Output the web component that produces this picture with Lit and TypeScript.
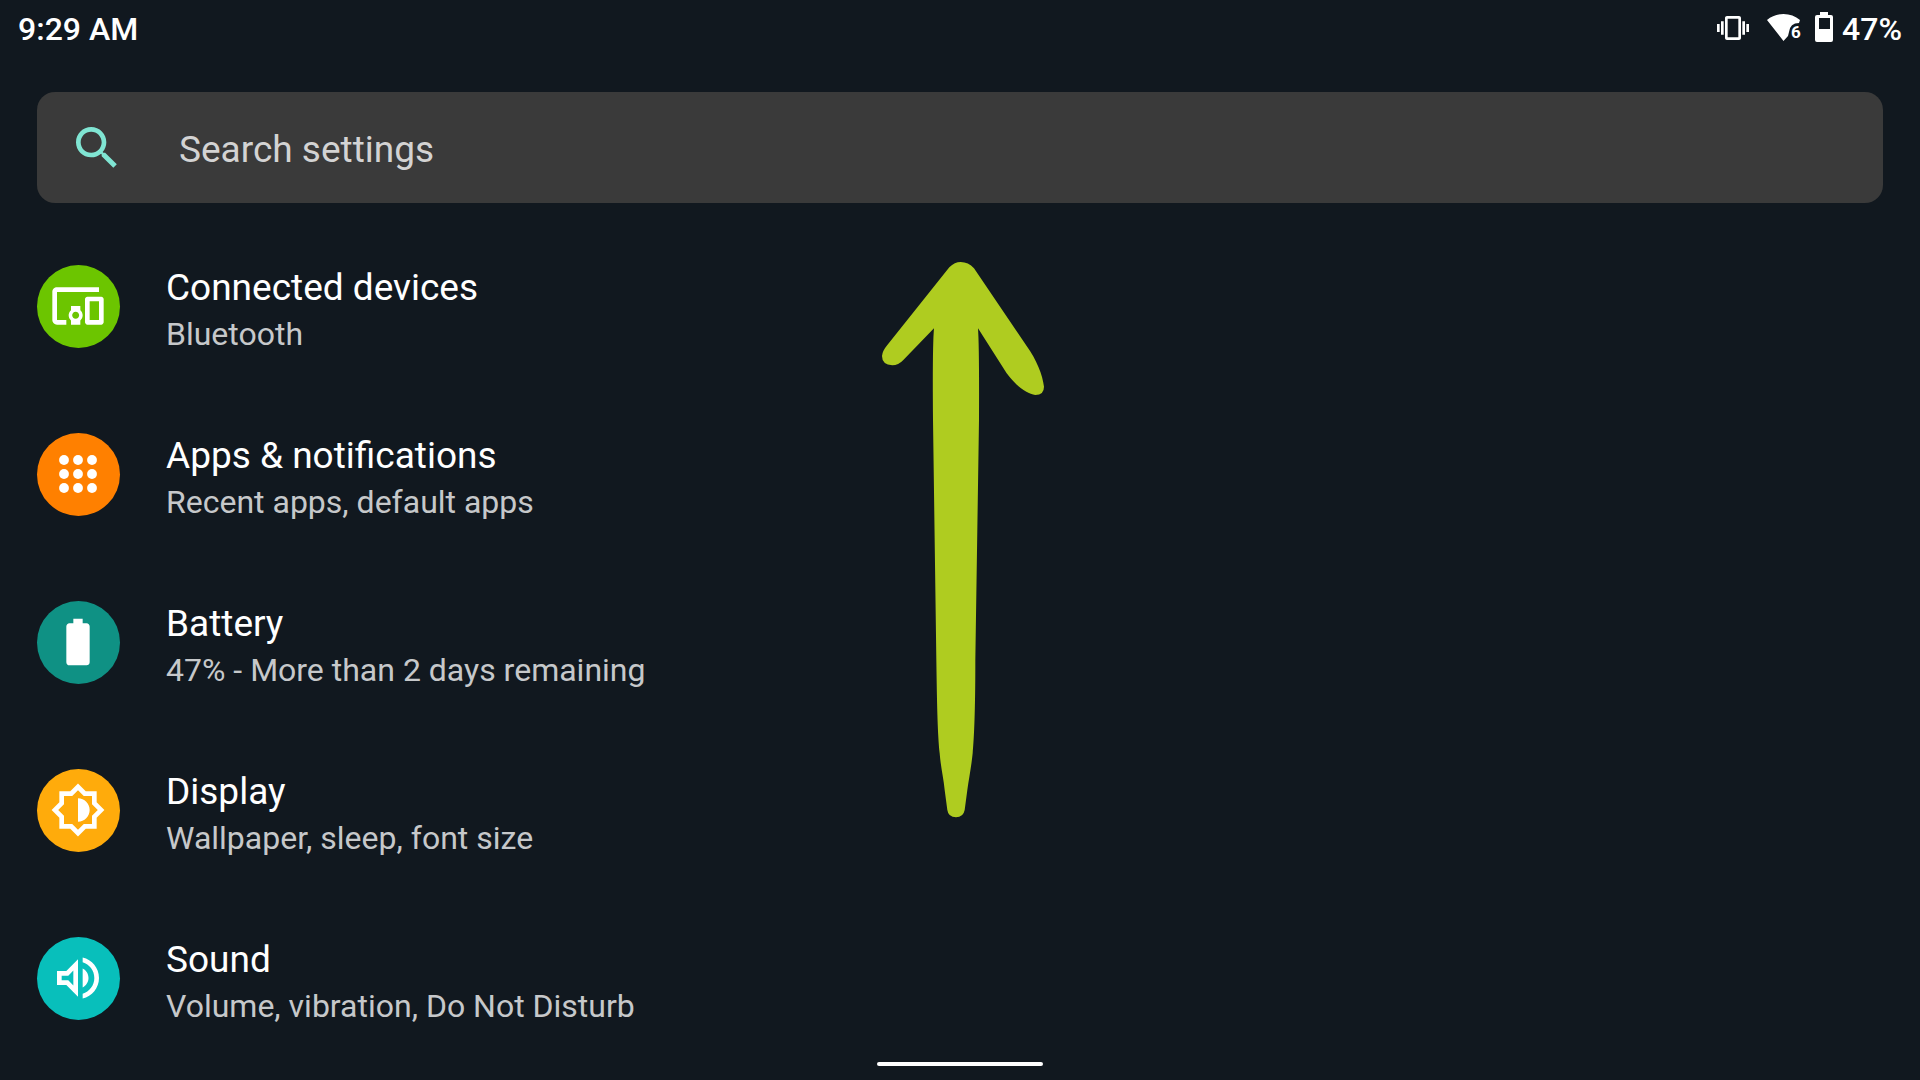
import { LitElement, html, css, svg, SVGTemplateResult } from "lit";
import { customElement } from "lit/decorators.js";
import { classMap } from "lit/directives/class-map.js";

interface SettingsEntry {
  id: string;
  title: string;
  summary: string;
  icon: SVGTemplateResult;
}

const ENTRIES: SettingsEntry[] = [
  {
    id: "devices",
    title: "Connected devices",
    summary: "Bluetooth",
    icon: svg`<path d="M3 6h18V4H3c-1.1 0-2 .9-2 2v12c0 1.1.9 2 2 2h4v-2H3V6zm10 6H9v1.78c-.61.55-1 1.33-1 2.22s.39 1.67 1 2.22V20h4v-1.78c.61-.55 1-1.34 1-2.22s-.39-1.67-1-2.22V12zm-2 5.5c-.83 0-1.5-.67-1.5-1.5s.67-1.5 1.5-1.5 1.5.67 1.5 1.5-.67 1.5-1.5 1.5zM22 8h-6c-.5 0-1 .5-1 1v10c0 .5.5 1 1 1h6c.5 0 1-.5 1-1V9c0-.5-.5-1-1-1zm-1 10h-4v-8h4v8z"/>`,
  },
  {
    id: "apps",
    title: "Apps & notifications",
    summary: "Recent apps, default apps",
    icon: svg`${[6, 12, 18].map((y) => [6, 12, 18].map((x) => svg`<circle cx=${x} cy=${y} r="2.1"/>`))}`,
  },
  {
    id: "battery",
    title: "Battery",
    summary: "47% - More than 2 days remaining",
    icon: svg`<path d="M15.67 4H14V2h-4v2H8.33C7.6 4 7 4.6 7 5.33v15.33C7 21.4 7.6 22 8.33 22h7.33c.74 0 1.34-.6 1.34-1.33V5.33C17 4.6 16.4 4 15.67 4z"/>`,
  },
  {
    id: "display",
    title: "Display",
    summary: "Wallpaper, sleep, font size",
    icon: svg`<path d="M20 8.69V4h-4.69L12 .69 8.69 4H4v4.69L.69 12 4 15.31V20h4.69L12 23.31 15.31 20H20v-4.69L23.31 12 20 8.69zm-2 5.79V18h-3.52L12 20.48 9.52 18H6v-3.52L3.52 12 6 9.52V6h3.52L12 3.52 14.48 6H18v3.52L20.48 12 18 14.48zM12 7v10c2.76 0 5-2.24 5-5s-2.24-5-5-5z"/>`,
  },
  {
    id: "sound",
    title: "Sound",
    summary: "Volume, vibration, Do Not Disturb",
    icon: svg`<path d="M3 9v6h4l5 5V4L7 9H3zm7-.17v6.34L7.83 13H5v-2h2.83L10 8.83zM16.5 12c0-1.77-1.02-3.29-2.5-4.03v8.05c1.48-.73 2.5-2.25 2.5-4.02zM14 3.23v2.06c2.89.86 5 3.54 5 6.71s-2.11 5.85-5 6.71v2.06c4.01-.91 7-4.49 7-8.77s-2.99-7.86-7-8.77z"/>`,
  },
];

@customElement("status-bar")
export class StatusBar extends LitElement {
  static styles = css`
    :host {
      display: flex;
      justify-content: space-between;
      align-items: center;
      height: 58px;
      padding: 0 18px;
      color: #fff;
      font-size: 32px;
      font-weight: 500;
      line-height: 58px;
    }
    .indicators {
      display: flex;
      align-items: center;
    }
    svg {
      display: block;
      margin-bottom: 2px;
      fill: #fff;
    }
    .vibrate {
      width: 32px;
      height: 32px;
      margin-right: 17px;
    }
    .wifi {
      width: 36px;
      height: 32px;
      margin-right: 13px;
    }
    .digit {
      font-size: 17px;
      font-weight: 700;
    }
    .battery {
      width: 18px;
      height: 32px;
      margin-right: 9px;
    }
  `;

  render() {
    return html`
      <time>9:29 AM</time>
      <div class="indicators">
        <svg class="vibrate" viewBox="0 0 24 24" aria-label="Vibrate">
          <path d="M0 15h2V9H0v6zm3 2h2V7H3v10zm19-8v6h2V9h-2zm-3 8h2V7h-2v10zM16.5 3h-9C6.67 3 6 3.67 6 4.5v15c0 .83.67 1.5 1.5 1.5h9c.83 0 1.5-.67 1.5-1.5v-15c0-.83-.67-1.5-1.5-1.5zM16 19H8V5h8v14z"/>
        </svg>
        <svg class="wifi" viewBox="0 0 36 32" aria-label="Wi-Fi">
          <path d="M1 8Q8 2 17.500 2T34 8L33 11Q24 11 23 20L22 24L17.500 29Z"/>
          <text class="digit" x="25" y="26">6</text>
        </svg>
        <svg class="battery" viewBox="0 0 18 32" aria-label="Battery level">
          <path fill-rule="evenodd" d="M5 0h8v3h3q2 0 2 2v23q0 2-2 2H2q-2 0-2-2V5q0-2 2-2h3zM4 6v11h11V6z"/>
        </svg>
        <span>47%</span>
      </div>
    `;
  }
}

@customElement("app-root")
export class AppRoot extends LitElement {
  static styles = css`
    :host {
      display: flex;
      flex-direction: column;
      position: relative;
      box-sizing: border-box;
      min-height: 100vh;
      background: #11181f;
      font-family: Roboto, "Liberation Sans", sans-serif;
    }
    .search {
      display: flex;
      align-items: center;
      gap: 54px;
      height: 111px;
      box-sizing: border-box;
      margin: 34px 37px 0;
      padding: 0 32px;
      border-radius: 18px;
      background: #3a3a3a;
    }
    .search svg {
      flex: none;
      width: 56px;
      height: 56px;
      fill: #80e5d3;
    }
    .search input {
      flex: 1;
      min-width: 0;
      height: 56px;
      padding: 4px 0 0;
      border: 0;
      outline: 0;
      background: none;
      color: #fff;
      font: 400 37px Roboto, "Liberation Sans", sans-serif;
    }
    .search input::placeholder {
      color: #d3d3d3;
      opacity: 1;
    }
    .entries {
      display: flex;
      flex-direction: column;
      gap: 79px;
      margin: 0;
      padding: 62px 37px 0;
      list-style: none;
    }
    .entry {
      display: flex;
      gap: 46px;
      color: #fff;
      text-decoration: none;
    }
    .badge {
      display: grid;
      place-items: center;
      flex: none;
      box-sizing: border-box;
      width: 83px;
      height: 83px;
      padding: 0 2px 2px 0;
      border-radius: 50%;
    }
    .badge svg {
      width: 56px;
      height: 56px;
      fill: #fff;
    }
    .devices { background: #6cc500; }
    .apps { background: #ff8000; }
    .battery { background: #0f9184; }
    .display { background: #ffab0b; }
    .sound { background: #08bfbb; }
    .text {
      display: flex;
      flex-direction: column;
      gap: 3px;
    }
    .title {
      font-size: 37px;
      line-height: 46px;
    }
    .summary {
      color: #c6c8ca;
      font-size: 32px;
      line-height: 40px;
    }
    .swipe {
      position: absolute;
      top: 240px;
      left: calc(50% - 100px);
      width: 200px;
      height: 580px;
      fill: #afcc20;
      pointer-events: none;
    }
    .home {
      width: 166px;
      height: 4px;
      margin: auto auto 14px;
      padding: 0;
      border: 0;
      border-radius: 2px;
      background: #fff;
    }
  `;

  render() {
    return html`
      <status-bar></status-bar>
      <label class="search">
        <svg viewBox="0 0 24 24" aria-hidden="true">
          <path d="M15.5 14h-.79l-.28-.27C15.41 12.59 16 11.11 16 9.5 16 5.91 13.09 3 9.5 3S3 5.91 3 9.5 5.91 16 9.5 16c1.61 0 3.09-.59 4.23-1.57l.27.28v.79l5 4.99L20.49 19l-4.99-5zm-6 0C7.01 14 5 11.99 5 9.5S7.01 5 9.5 5 14 7.01 14 9.5 11.99 14 9.5 14z"/>
        </svg>
        <input type="search" placeholder="Search settings" aria-label="Search settings" />
      </label>
      <ul class="entries">
        ${ENTRIES.map(
          (entry) => html`
            <li>
              <a class="entry" href="#${entry.id}">
                <span class=${classMap({ badge: true, [entry.id]: true })}>
                  <svg viewBox="0 0 24 24" aria-hidden="true">${entry.icon}</svg>
                </span>
                <span class="text">
                  <span class="title">${entry.title}</span>
                  <span class="summary">${entry.summary}</span>
                </span>
              </a>
            </li>
          `
        )}
      </ul>
      <svg class="swipe" viewBox="0 0 600 1740" aria-hidden="true">
        <path d="M268 82Q284 66 302 66Q325 66 342 85L500 318C530 360 548 405 552 440Q552 465 526 465C500 462 468 438 440 400L354 265Q358 320 357 540L346 1260C346 1420 342 1500 338 1540C334 1580 326 1620 322 1650L314 1710Q310 1732 288 1732Q265 1732 262 1710L254 1650C250 1610 242 1580 239 1540C233 1480 231 1400 229 1260L219 540Q217 320 222 265L130 360Q115 376 97 376Q66 374 66 348Q67 333 82 315Z"/>
      </svg>
      <button class="home" aria-label="Home"></button>
    `;
  }
}
